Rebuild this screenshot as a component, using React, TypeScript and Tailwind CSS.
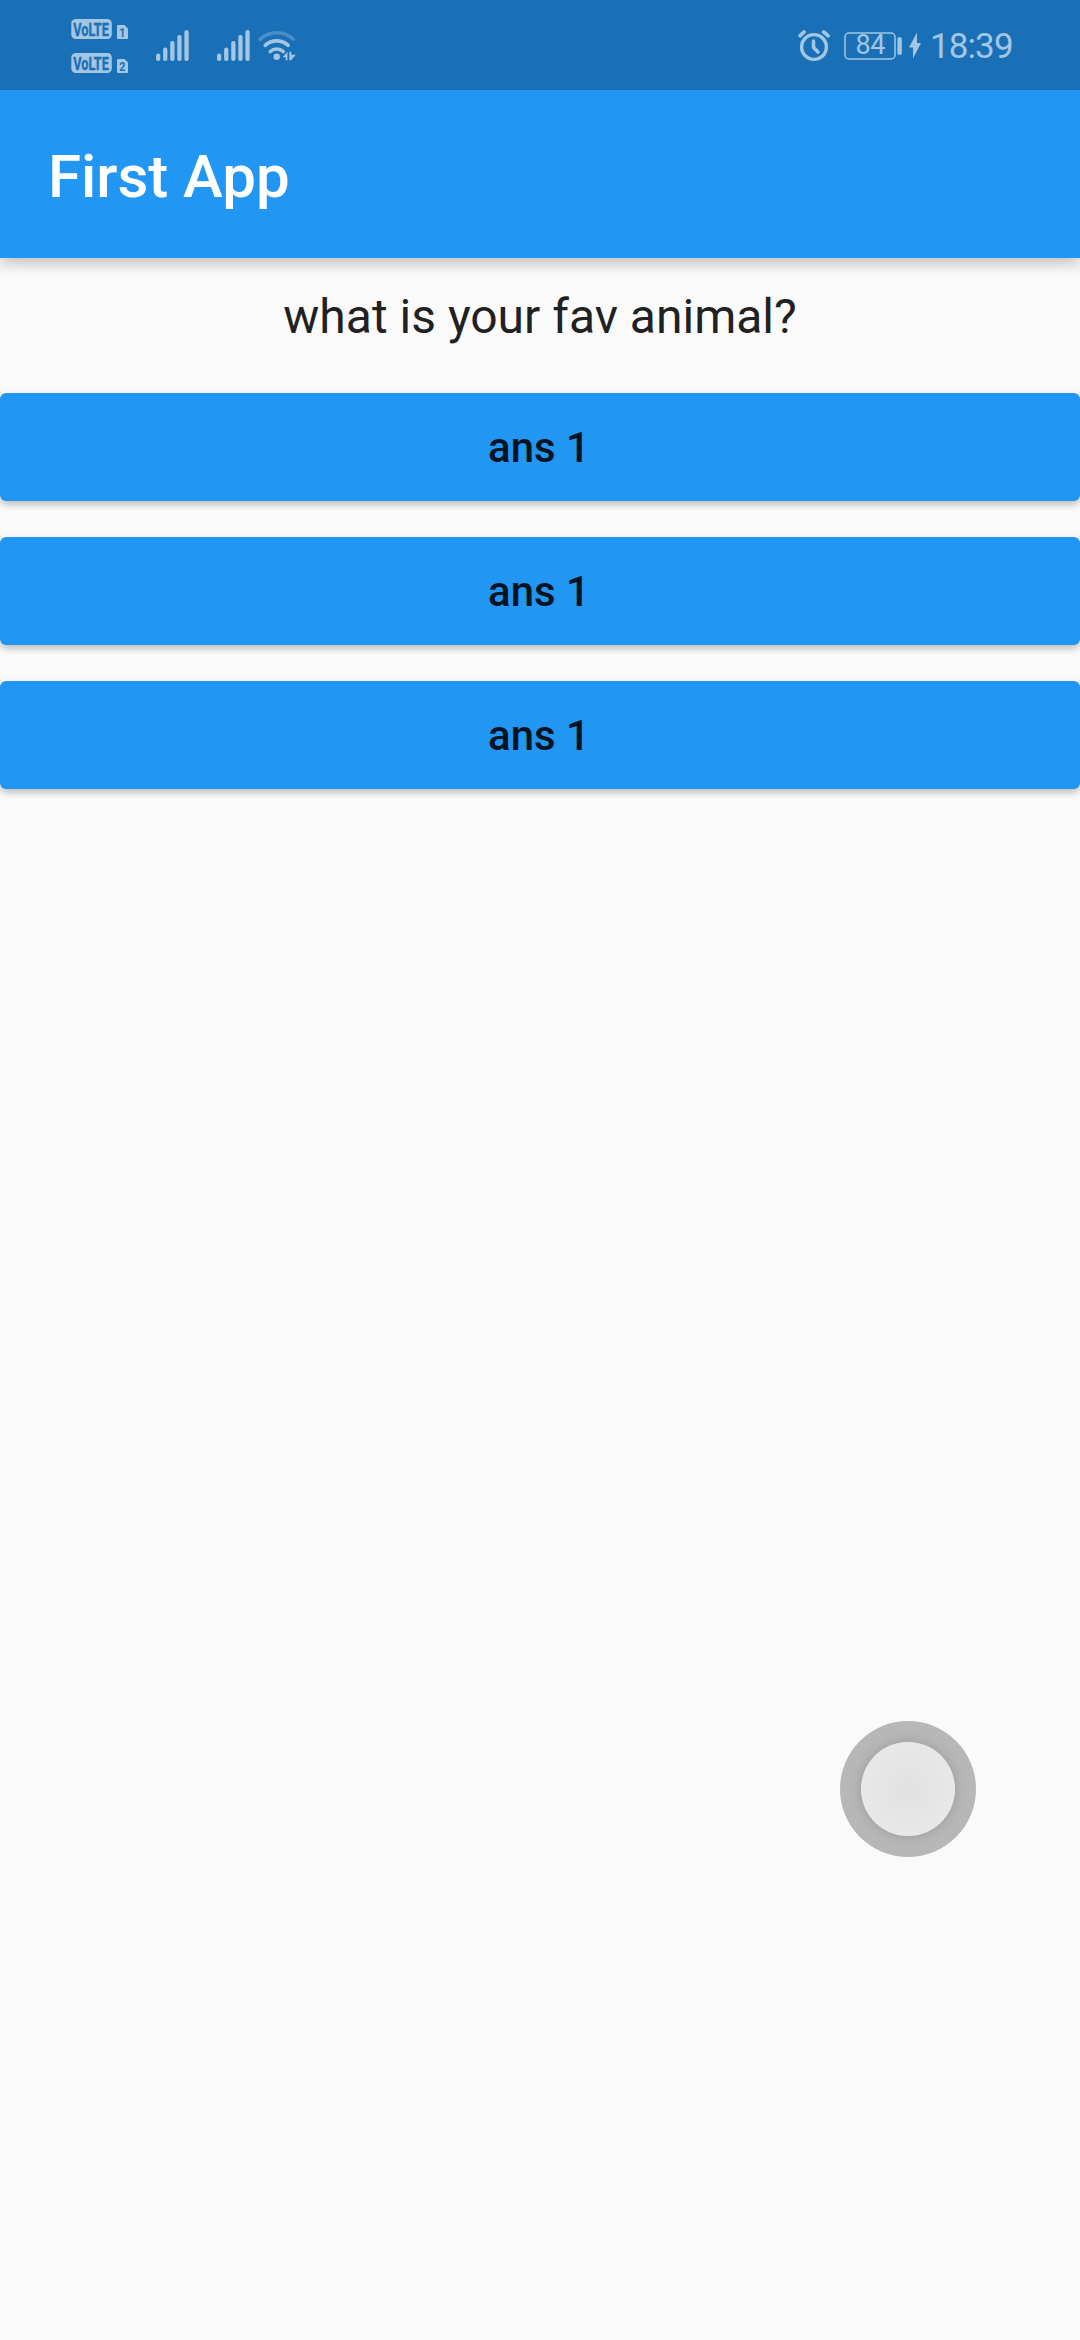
import React from "react";

const tint = "#a3c6e2";
const bar = "#1a70b7";

function VolteRow({ sim }: { sim: string }) {
  return (
    <svg width="58" height="20" viewBox="0 0 58 20" className="overflow-visible">
      <rect x="0.3" y="0" width="40.500" height="20" rx="4.5" fill={tint} />
      <text
        transform="translate(2.2 16.5) scale(0.67 1)"
        fontFamily="Roboto, sans-serif"
        fontWeight="700"
        fontSize="19"
        fill={bar}
        stroke={bar}
        strokeWidth="0.4"
      >
        VoLTE
      </text>
      <path d="M47 6h6.500l3.500 3.500V19a1 1 0 0 1-1 1h-9a1 1 0 0 1-1-1V7a1 1 0 0 1 1-1z" fill={tint} />
      <text
        transform="translate(51.2 17.5) scale(0.85 1)"
        textAnchor="middle"
        fontFamily="Roboto, sans-serif"
        fontWeight="700"
        fontSize="12.5"
        fill={bar}
      >
        {sim}
      </text>
    </svg>
  );
}

function Signal() {
  const tops = [23.5, 17.5, 11, 5, 0];
  return (
    <svg width="33" height="31" viewBox="0 0 33 31">
      {tops.map((top, i) => (
        <rect key={i} x={i * 7.1} y={top} width="4.3" height={31 - top} rx="2.1" fill={tint} />
      ))}
    </svg>
  );
}

function Wifi() {
  return (
    <svg width="39" height="32" viewBox="0 0 39 32" fill="none" strokeLinecap="round">
      <path d="M2.200 9.200a24.500 24.500 0 0 1 33 0" stroke="#4a8fc8" strokeWidth="3.600" />
      <path d="M7.200 15.400a17 17 0 0 1 23 0" stroke={tint} strokeWidth="3.600" />
      <path d="M12.200 21.500a9.500 9.500 0 0 1 13 0" stroke={tint} strokeWidth="3.600" />
      <circle cx="18.700" cy="26.700" r="3.200" fill={tint} />
      <path d="M29.500 21.700l-4.800 5.600h3v3h1.800zM31.300 21.700h1.900v3h4.500l-4.500 5.600h-1.900z" fill={tint} />
    </svg>
  );
}

function Alarm() {
  return (
    <svg width="32" height="32" viewBox="0 0 32 32" fill="none" stroke={tint} strokeLinecap="round">
      <circle cx="16" cy="17" r="12.400" strokeWidth="3.400" />
      <path d="M15.500 11v6.500l4.500 4.500" strokeWidth="3.500" strokeLinejoin="round" />
      <path d="M2.200 5.700l3.800-3.700M25.700 2l4.300 3.700" strokeWidth="3.700" />
    </svg>
  );
}

function Battery() {
  return (
    <svg width="59" height="28" viewBox="0 0 59 28" className="overflow-visible">
      <rect x="1" y="1" width="50" height="26" rx="4" fill="none" stroke={tint} strokeWidth="1.500" />
      <text
        x="26.300"
        y="22.400"
        textAnchor="middle"
        fontFamily="Roboto, sans-serif"
        fontSize="27"
        letterSpacing="-0.5"
        fill={tint}
      >
        84
      </text>
      <rect x="53.400" y="5.300" width="4.400" height="17.400" rx="1.500" fill={tint} />
    </svg>
  );
}

function StatusBar() {
  return (
    <div className="flex h-[90px] bg-[#1a70b7]">
      <div className="flex flex-col gap-[14px] pl-[71px] pt-[19px]">
        <VolteRow sim="1" />
        <VolteRow sim="2" />
      </div>
      <div className="flex items-start pl-[26.500px] pt-[30px]">
        <Signal />
        <div className="w-[28px]" />
        <Signal />
        <div className="ml-[8.500px]">
          <Wifi />
        </div>
      </div>
      <div className="ml-auto flex items-start pr-[66px] pt-[30px]">
        <Alarm />
        <div className="ml-[14px] mt-[1.500px]">
          <Battery />
        </div>
        <svg className="ml-[6px] mt-[2px]" width="12" height="27" viewBox="0 0 12 27">
          <path d="M8 0.500v10.500h4L4 26.500V15.500H0z" fill={tint} />
        </svg>
        <div className="ml-[9px] mt-[1px] w-[84px] whitespace-nowrap text-[35px] leading-[31px] tracking-[-0.900px] text-[#a3c6e2]">
          18:39
        </div>
      </div>
    </div>
  );
}

function AnswerButton({ label }: { label: string }) {
  return (
    <button className="h-[108px] w-full rounded-[6px] bg-[#2196f3] pr-[2px] pt-[2px] text-[42px] font-medium leading-[48px] text-[#03131f] shadow-[0_3px_9px_0_rgba(0,0,0,0.12),0_5px_6px_-1px_rgba(0,0,0,0.14)]">
      {label}
    </button>
  );
}

export default function App() {
  const answers = ["ans 1", "ans 1", "ans 1"];
  return (
    <div className="relative h-[2340px] w-[1080px] overflow-hidden bg-[#fafafa] font-['Roboto',sans-serif]">
      <header className="relative bg-[#2196f3] shadow-[0_6px_12px_0_rgba(0,0,0,0.14),0_3px_18px_0_rgba(0,0,0,0.12)]">
        <StatusBar />
        <div className="flex h-[168px] items-center pl-[48px]">
          <h1 className="mt-[6px] text-[60px] font-medium leading-[70px] tracking-[-0.050px] text-white">
            First App
          </h1>
        </div>
      </header>
      <main>
        <p className="pt-[31px] text-center text-[48px] leading-[56px] text-[#212121]">
          what is your fav animal?
        </p>
        <div className="mt-[48px] flex flex-col gap-[36px]">
          {answers.map((answer, i) => (
            <AnswerButton key={i} label={answer} />
          ))}
        </div>
      </main>
      <div className="absolute left-[840px] top-[1721px] flex h-[136px] w-[136px] items-center justify-center rounded-full bg-[#b7b7b7]">
        <div className="h-[94px] w-[94px] rounded-full bg-[radial-gradient(circle,#e1e1e1_0%,#e8e8e8_70%)] shadow-[0_0_12px_rgba(0,0,0,0.16)]" />
      </div>
    </div>
  );
}
